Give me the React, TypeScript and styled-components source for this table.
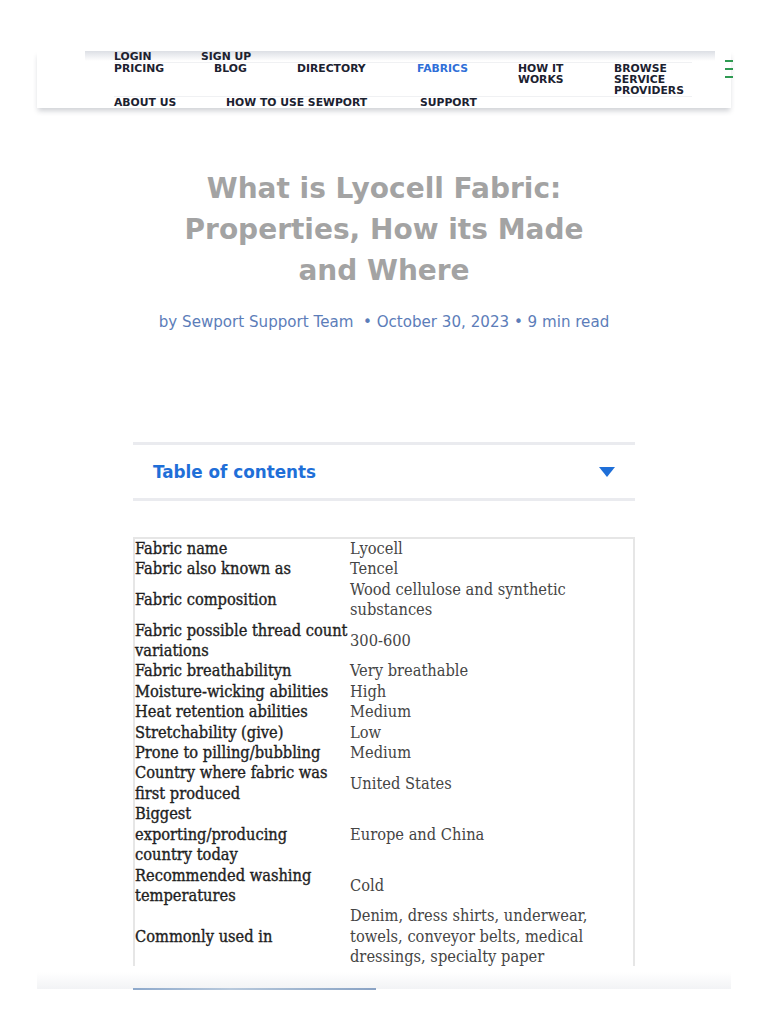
import React from "react";
import styled, { createGlobalStyle } from "styled-components";

const Global = createGlobalStyle`
  html, body { margin: 0; padding: 0; background: #fff; }
  body { font-family: "DejaVu Sans", "Open Sans", sans-serif; }
`;

const Page = styled.div`
  width: 768px;
  height: 1024px;
  overflow: hidden;
  position: relative;
  background: #fff;
`;

const Frame = styled.div`
  margin: 0 37px;
  width: 694px;
  padding-top: 51px;
`;

const Header = styled.header`
  position: relative;
  background: #fff;
  padding: 0 0 0 77px;
  box-shadow: 0 4px 5px -1px rgba(40, 50, 70, 0.22);
  &::before {
    content: "";
    position: absolute;
    left: 48px;
    top: 0;
    width: 630px;
    height: 10px;
    background: linear-gradient(#dcdfe5, #ffffff);
  }
`;

const NavRow = styled.div<{ $cols: string; $top?: boolean; $bottom?: boolean; $h?: number }>`
  position: relative;
  display: grid;
  grid-template-columns: ${(p) => p.$cols};
  border-top: ${(p) => (p.$top ? "1px solid #f0f1f3" : "none")};
  border-bottom: ${(p) => (p.$bottom ? "1px solid #f0f1f3" : "none")};
  height: ${(p) => (p.$h ? `${p.$h}px` : "auto")};
  width: 578px;
`;

const NavItem = styled.a<{ $active?: boolean; $pad?: number }>`
  display: block;
  font-family: "DejaVu Sans", sans-serif;
  font-weight: 700;
  font-size: 10.8px;
  line-height: 11px;
  text-transform: uppercase;
  color: ${(p) => (p.$active ? "#2f6fd8" : "#1c2230")};
  padding-left: ${(p) => p.$pad ?? 0}px;
  text-decoration: none;
  white-space: nowrap;
`;

const Burger = styled.div`
  position: absolute;
  right: -2px;
  top: 9px;
  display: flex;
  flex-direction: column;
  gap: 6px;
  & > span {
    display: block;
    width: 8px;
    height: 2px;
    background: #2f9a52;
  }
`;

const Hero = styled.div`
  padding-top: 60px;
  text-align: center;
`;

const Title = styled.h1`
  margin: 0 auto;
  width: 430px;
  font-family: "DejaVu Sans", sans-serif;
  font-weight: 700;
  font-size: 28px;
  line-height: 41px;
  color: #a3a3a3;
`;

const Byline = styled.p`
  margin: 22px 0 0;
  font-family: "DejaVu Sans", sans-serif;
  font-size: 15.1px;
  color: #5c7db9;
`;

const Content = styled.div`
  width: 502px;
  margin: 111px auto 0 96px;
`;

const Toc = styled.div`
  border-top: 3px solid #eaebef;
  border-bottom: 3px solid #eaebef;
  height: 53px;
  display: flex;
  align-items: center;
  justify-content: space-between;
  padding: 0 20px;
`;

const TocTitle = styled.span`
  font-family: "DejaVu Sans", sans-serif;
  font-weight: 700;
  font-size: 16.8px;
  color: #1f6fd8;
`;

const Caret = styled.svg`
  width: 16px;
  height: 10px;
`;

const TableWrap = styled.div`
  margin-top: 36px;
  height: 429px;
  overflow: hidden;
`;

const Table = styled.table`
  border-collapse: collapse;
  width: 502px;
  border: 2px solid #e6e6e6;
  font-family: "DejaVu Serif Condensed", "Liberation Serif", serif;
  font-size: 16.3px;
  line-height: 20.4px;
`;

const Label = styled.td`
  width: 214px;
  padding: 0;
  vertical-align: middle;
  white-space: pre-line;
  color: #1e1e1e;
  -webkit-text-stroke: 0.35px #1e1e1e;
`;

const Value = styled.td`
  padding: 0 0 0 1px;
  vertical-align: middle;
  color: #454545;
`;

const FootShade = styled.div`
  position: absolute;
  left: 37px;
  top: 972px;
  width: 694px;
  height: 17px;
  background: linear-gradient(#ffffff, #f2f3f5);
`;

const FootImage = styled.div`
  position: absolute;
  left: 133px;
  top: 988px;
  width: 243px;
  height: 2px;
  background: linear-gradient(90deg, #8ea9cb, #b8c9dc 40%, #9fb5cf 70%, #8aa3c4);
`;

const rows: [string, string][] = [
  ["Fabric name", "Lyocell"],
  ["Fabric also known as", "Tencel"],
  ["Fabric composition", "Wood cellulose and synthetic substances"],
  ["Fabric possible thread count variations", "300-600"],
  ["Fabric breathabilityn", "Very breathable"],
  ["Moisture-wicking abilities", "High"],
  ["Heat retention abilities", "Medium"],
  ["Stretchability (give)", "Low"],
  ["Prone to pilling/bubbling", "Medium"],
  ["Country where fabric was first produced", "United States"],
  ["Biggest\nexporting/producing\ncountry today", "Europe and China"],
  ["Recommended washing temperatures", "Cold"],
  ["Commonly used in", "Denim, dress shirts, underwear, towels, conveyor belts, medical dressings, specialty paper"],
];

export default function App() {
  return (
    <Page>
      <Global />
      <Frame>
        <Header>
          <NavRow $cols="87px 96px" $bottom>
            <NavItem>Login</NavItem>
            <NavItem>Sign up</NavItem>
          </NavRow>
          <NavRow $cols="87px 96px 120px 101px 96px 1fr" $h={33}>
            <NavItem>Pricing</NavItem>
            <NavItem $pad={13}>Blog</NavItem>
            <NavItem>Directory</NavItem>
            <NavItem $active>Fabrics</NavItem>
            <NavItem>How it<br />works</NavItem>
            <NavItem>Browse<br />service<br />providers</NavItem>
          </NavRow>
          <NavRow $cols="112px 194px 1fr" $top>
            <NavItem>About us</NavItem>
            <NavItem>How to use Sewport</NavItem>
            <NavItem>Support</NavItem>
          </NavRow>
          <Burger>
            <span />
            <span />
            <span />
          </Burger>
        </Header>
        <Hero>
          <Title>What is Lyocell Fabric: Properties, How its Made and Where</Title>
          <Byline>by Sewport Support Team &nbsp;• October 30, 2023 • 9 min read</Byline>
        </Hero>
        <Content>
          <Toc>
            <TocTitle>Table of contents</TocTitle>
            <Caret viewBox="0 0 16 10">
              <path d="M0 0 H16 L8 10 Z" fill="#1f6fd8" />
            </Caret>
          </Toc>
          <TableWrap>
            <Table>
              <tbody>
                {rows.map(([l, v]) => (
                  <tr key={l}>
                    <Label>{l}</Label>
                    <Value>{v}</Value>
                  </tr>
                ))}
              </tbody>
            </Table>
          </TableWrap>
        </Content>
      </Frame>
      <FootShade />
      <FootImage />
    </Page>
  );
}
